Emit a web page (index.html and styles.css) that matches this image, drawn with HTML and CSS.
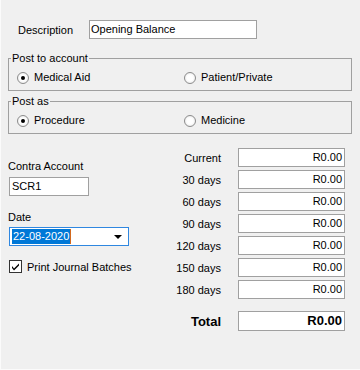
FILE: index.html
```html
<!DOCTYPE html>
<html lang="en">
<head>
<meta charset="UTF-8" />
<meta name="viewport" content="width=device-width, initial-scale=1" />
<title>Opening Balance</title>
<link rel="stylesheet" href="styles.css">
</head>
<body>

<div class="form">
  <div class="desc-row">
    <label class="desc-label" for="desc">Description</label>
    <div class="box desc-box" id="desc">Opening Balance</div>
  </div>

  <fieldset class="group first">
    <legend>Post to account</legend>
    <div class="options">
      <span class="option"><span class="radio checked"></span>Medical Aid</span>
      <span class="option"><span class="radio"></span>Patient/Private</span>
    </div>
  </fieldset>

  <fieldset class="group">
    <legend>Post as</legend>
    <div class="options">
      <span class="option"><span class="radio checked"></span>Procedure</span>
      <span class="option"><span class="radio"></span>Medicine</span>
    </div>
  </fieldset>

  <div class="lower">
    <div class="left-col">
      <div class="field-label">Contra Account</div>
      <div class="box contra-box">SCR1</div>

      <div class="field-label date-label">Date</div>
      <div class="combo">
        <span class="combo-text"><span class="sel">22-08-2020</span><span class="caret"></span></span>
        <span class="combo-arrow"></span>
      </div>

      <div class="check-row">
        <span class="checkbox">
          <svg viewBox="0 0 11 11" aria-hidden="true"><path d="M2 5 L4 7.5 L9 2.5 L9 4.5 L4 9.5 L2 7 Z"/></svg>
        </span>
        Print Journal Batches
      </div>
    </div>

    <div class="ageing">
      <span class="age-label">Current</span><div class="box amount">R0.00</div>
      <span class="age-label">30 days</span><div class="box amount">R0.00</div>
      <span class="age-label">60 days</span><div class="box amount">R0.00</div>
      <span class="age-label">90 days</span><div class="box amount">R0.00</div>
      <span class="age-label">120 days</span><div class="box amount">R0.00</div>
      <span class="age-label">150 days</span><div class="box amount">R0.00</div>
      <span class="age-label">180 days</span><div class="box amount">R0.00</div>
      <span class="age-label total-label">Total</span><div class="box amount total-box">R0.00</div>
    </div>
  </div>
</div>

</body>
</html>
```

FILE: styles.css
```css
html, body {
  margin: 0;
  background: #f0f0f0;
}
body {
  font-family: "Liberation Sans", Arial, sans-serif;
  font-size: 11px;
  color: #000;
}
.form {
  box-sizing: border-box;
  width: 360px;
  height: 370px;
  padding: 20px 8px 0 7px;
  border-left: 1px solid #fbfbfb;
  border-bottom: 1px solid #fbfbfb;
}

/* text boxes */
.box {
  box-sizing: border-box;
  height: 19px;
  line-height: 17px;
  background: #fff;
  border: 1px solid #a0a0a0;
  padding: 0 2px;
  white-space: nowrap;
}

.desc-row {
  display: flex;
  align-items: center;
  padding-left: 10px;
}
.desc-label {
  width: 71px;
}
.desc-box {
  width: 168px;
  padding-left: 1px;
}

/* group boxes */
.group {
  margin: 13px 0 0 0;
  padding: 0 0 6px 8px;
  border: 1px solid #a0a0a0;
  line-height: 13px;
}
.group + .group {
  margin-top: 4px;
}
.group legend {
  margin-left: -6px;
  padding: 0 1px;
  line-height: 13px;
}
.options {
  display: flex;
  padding-top: 6px;
}
.option {
  display: flex;
  align-items: center;
  width: 167px;
}
.radio {
  box-sizing: border-box;
  width: 12px;
  height: 12px;
  margin-right: 5px;
  border-radius: 50%;
  border: 1px solid #8c8c8c;
  background: radial-gradient(circle, #ffffff 40%, #e2e2e2 100%);
  display: flex;
  align-items: center;
  justify-content: center;
}
.radio.checked::after {
  content: "";
  width: 4px;
  height: 4px;
  border-radius: 50%;
  background: #000;
}

/* lower area */
.lower {
  display: flex;
  justify-content: space-between;
  margin-top: 14px;
  padding-right: 7px;
}
.left-col {
  padding-top: 12px;
  padding-left: 1px;
}
.field-label {
  line-height: 13px;
  margin-left: -1px;
}
.contra-box {
  width: 80px;
  margin-top: 4px;
}
.date-label {
  margin-top: 15px;
}
.combo {
  box-sizing: border-box;
  display: flex;
  align-items: center;
  width: 120px;
  height: 19px;
  margin-top: 3px;
  background: #fff;
  border: 1px solid #2f87e0;
}
.combo-text {
  display: flex;
  align-items: center;
  flex: 1;
  padding-left: 2px;
}
.sel {
  background: #0078d7;
  color: #fff;
  line-height: 15px;
  padding: 0 1px;
}
.caret {
  width: 1px;
  height: 15px;
  background: #d2691e;
}
.combo-arrow {
  width: 0;
  height: 0;
  margin-right: 6px;
  border-left: 4px solid transparent;
  border-right: 4px solid transparent;
  border-top: 4px solid #000;
}
.check-row {
  display: flex;
  align-items: center;
  margin-top: 14px;
}
.checkbox {
  box-sizing: border-box;
  width: 13px;
  height: 13px;
  margin-right: 5px;
  border: 1px solid #333;
  background: #fff;
  display: flex;
}
.checkbox svg {
  width: 11px;
  height: 11px;
  fill: #000;
}

/* ageing amounts */
.ageing {
  display: grid;
  grid-template-columns: auto 107px;
  column-gap: 17px;
  row-gap: 3px;
  align-items: center;
}
.age-label {
  text-align: right;
}
.amount {
  text-align: right;
}
.total-label {
  font-weight: bold;
  font-size: 13px;
  margin-top: 9px;
}
.total-box {
  height: 20px;
  line-height: 18px;
  font-weight: bold;
  font-size: 13px;
  margin-top: 9px;
}
```
